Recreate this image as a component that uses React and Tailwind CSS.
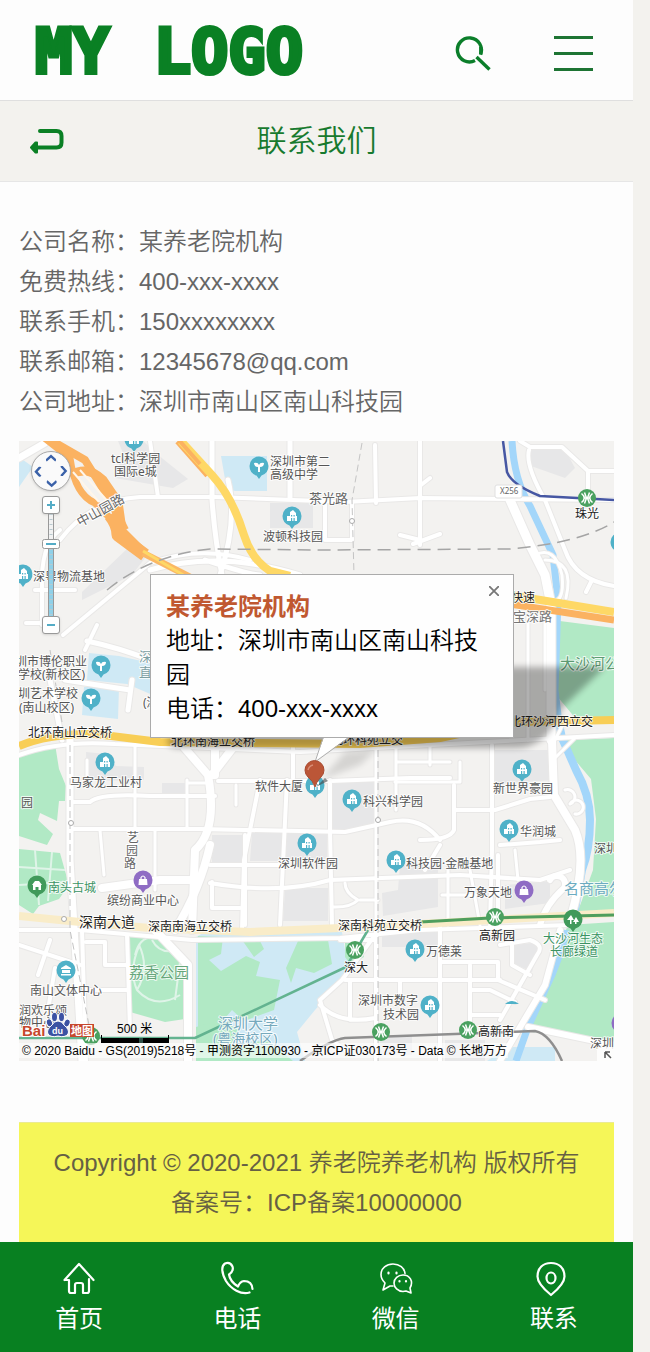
import React from "react";

const fontStack = "font-['Liberation_Sans','Noto_Sans_CJK_SC',sans-serif]";

const contacts = [
  ["公司名称", "某养老院机构"],
  ["免费热线", "400-xxx-xxxx"],
  ["联系手机", "150xxxxxxxx"],
  ["联系邮箱", "12345678@qq.com"],
  ["公司地址", "深圳市南山区南山科技园"],
];

function Header() {
  return (
    <header className="flex h-[101px] items-center justify-between border-b border-[#dfdfdf] pr-10 pl-[35px]">
      <a
        href="#home"
        aria-label="MY LOGO"
        className="flex gap-11 pt-1 font-['DejaVu_Sans_Mono',monospace] text-[62px] leading-none font-bold text-[#0a8024] [-webkit-text-stroke:4px_#0a8024]"
      >
        <span>MY</span>
        <span>LOGO</span>
      </a>
      <div className="flex items-center gap-[63px] pt-1.5">
        <button type="button" aria-label="搜索">
          <svg className="block h-9 w-9" viewBox="0 0 36 36" fill="none" stroke="#0b7e2a">
            <path d="M25.500 19.500A12 12 0 1 0 20 25.500" strokeWidth="3.400" />
            <path d="M21.500 22 34.500 34.500" strokeWidth="3.400" />
            <path d="M25.800 12v7.500" strokeWidth="3.400" />
          </svg>
        </button>
        <button type="button" aria-label="菜单" className="flex w-[39px] flex-col gap-[13px]">
          <span className="h-[3px] bg-[#1d7433]" />
          <span className="h-[3px] bg-[#1d7433]" />
          <span className="h-[3px] bg-[#1d7433]" />
        </button>
      </div>
    </header>
  );
}

function TitleBar() {
  return (
    <div className="grid h-[81px] grid-cols-[64px_1fr_64px] items-center border-b border-[#e6e6e6] bg-[#f3f2ee]">
      <a href="#back" aria-label="返回" className="pl-[29px]">
        <svg className="block h-[26px] w-[35px]" viewBox="0 0 35 26">
          <path d="M11 3h16.500q5 0 5 5v6.500q0 5-5 5H8" fill="none" stroke="#0a8024" strokeWidth="4" strokeLinecap="round" />
          <path d="M2 19.500 6.500 14.500h1.500v10H6.500z" fill="#0a8024" stroke="#0a8024" strokeLinejoin="round" strokeWidth="2" />
        </svg>
      </a>
      <h1 className="text-center text-[30px] leading-10 font-[350] text-[#177a2e]">联系我们</h1>
    </div>
  );
}

const whiteRoads = [
  ["M19 458 45 443", 7],
  ["M150 441 158 497 M60 540Q90 500 140 497H215L345 502 420 498 614 500", 4],
  ["M60 530Q40 545 42 590V625M26 623H42M35 590H75M63 635 150 563Q200 545 250 560M97 625 85 650", 4],
  ["M212 441V500Q215 540 222 575M228 480Q238 520 220 575M150 570Q220 550 300 575M205 560Q250 575 260 575M290 441V497", 5],
  ["M352 503V540H325V503M376 503 375 445M400 535 420 540M420 505V441M420 505V545M413 544 440 534M430 478 421 485", 4],
  ["M520 441 530 447H562L588 471H614M529 450Q525 465 545 500L565 550Q575 580 614 586M588 471V500M586 592 592 580", 4],
  ["M510 500 530 545 545 575 551 605V740", 9],
  ["M535 555Q555 545 562 575Q565 605 550 600M545 560Q575 560 566 598", 3],
  ["M528 615V740M545 610V690M490 610V640", 3],
  ["M87 641Q120 648 150 660M65 680 130 690M128 710 132 680M50 680 62 740", 5],
  ["M19 755Q60 740 115 744L300 752 614 735", 4],
  ["M70 740V860L82 1061", 7],
  ["M72 802H90Q100 793 150 796H215M72 829H200L345 832 390 822Q420 815 440 840", 4],
  ["M135 745V829M100 830 104 875M187 780V829M187 783H210M155 830V890M87 760V776", 3],
  ["M182 745 208 775Q218 830 195 850L192 930M235 745 212 775M215 745V775", 8],
  ["M293 745V778M218 781H330L410 778H450M330 780V830L332 925M260 780 244 860 242 930M287 780 280 925", 4],
  ["M236 785V805M376 745V925M396 745V810M396 762H450M430 745V765M460 762V782H395", 3],
  ["M492 745V850L490 925M454 785V830Q450 840 420 840M455 810H495L530 799 550 797M500 845 540 842 560 840M498 855V925M440 845 425 870", 4],
  ["M552 740 554 795 575 830Q588 860 570 920", 8],
  ["M565 790a7 7 0 1 1 5 14a7 7 0 1 1 5 10M575 738 556 757M555 740 565 720", 3],
  ["M210 883Q280 895 330 880L460 875 540 880 570 870M210 865H280M245 835V925M212 882V908H240", 4],
  ["M345 883Q345 893 358 900 350 908 332 907M360 900H378M470 870 480 925M448 868V925M442 895H480M515 850 518 880", 3],
  ["M19 930 80 930 192 940 340 938 420 930 570 925", 4],
  ["M82 930 86 1061M86 942H105V965H128M19 945 80 965M50 940 38 975M55 968 48 1010M86 990H128M127 935 130 1030", 4],
  ["M155 930 188 965V1061M210 845Q200 890 175 930M192 880H160L102 888", 8],
  ["M376 925V1061M440 925V1061M345 980H375M320 1000 342 980 375 935M350 980V1020M320 1000 332 1040 345 1050M320 1005Q340 1025 375 1018M376 980H500", 4],
  ["M340 940H376M440 962H498V980L545 1000M500 945 530 940Q545 945 537 955L500 1020M512 942V965L530 975M470 965V1035M470 990H490L515 1002M440 980H498M400 982V1000M470 1015H500", 4],
  ["M560 930 545 985 500 1061M528 1027 614 1045M550 880a8 8 0 1 1 14 8Q545 905 540 925", 6],
];

const cyanPins = [
  ["building", 134, 440],
  ["school", 259, 467],
  ["building", 292, 517],
  ["building", 23, 575],
  ["school", 101, 666],
  ["school", 91, 699],
  ["building", 105, 763],
  ["building", 315, 786],
  ["building", 352, 800],
  ["building", 522, 770],
  ["building", 509, 830],
  ["building", 307, 844],
  ["building", 396, 861],
  ["hall", 66, 971],
  ["building", 415, 950],
  ["building", 430, 1006],
  ["building", 620, 543],
];

const labels = [
  ["tcl科学园", 111, 463],
  ["国际e城", 114, 476],
  ["深圳市第二", 270, 466],
  ["高级中学", 270, 479],
  ["茶光路", 309, 503, 13, "#666666"],
  ["波顿科技园", 263, 541],
  ["深粤物流基地", 33, 581],
  ["圳市博伦职业", 15, 666],
  ["学校(新校区)", 18, 679],
  ["圳艺术学校", 18, 698],
  ["(南山校区)", 19, 712],
  ["深圳市", 139, 661, 13, "#7d9fa3"],
  ["直属", 139, 677, 13, "#7d9fa3"],
  ["(深", 143, 707],
  ["北环南山立交桥", 28, 737, 12, "#222222"],
  ["北环南海立交桥", 171, 746, 12, "#222222"],
  ["北环科苑立交", 331, 744, 12, "#222222"],
  ["快速", 511, 602, 12, "#222222"],
  ["宝深路", 513, 621, 13, "#777777"],
  ["北环沙河西立交", 509, 726, 12, "#222222"],
  ["大沙河公", 560, 669, 15, "#5e9b72"],
  ["马家龙工业村", 70, 787],
  ["软件大厦", 255, 791],
  ["科兴科学园", 363, 806],
  ["新世界豪园", 493, 793],
  ["华润城", 520, 836],
  ["深圳", 594, 853],
  ["园", 21, 807],
  ["深圳软件园", 278, 868],
  ["科技园·金融基地", 406, 868],
  ["南头古城", 48, 892, 12, "#3b9363"],
  ["缤纷商业中心", 107, 905],
  ["万象天地", 464, 897],
  ["名商高尔", 564, 894, 15, "#6cabc0"],
  ["深南大道", 79, 927, 14, "#222222"],
  ["深南南海立交桥", 148, 931, 12, "#222222"],
  ["深南科苑立交桥", 338, 930, 12, "#222222"],
  ["高新园", 479, 940, 12, "#222222"],
  ["大沙河生态", 543, 943, 12, "#3b9363"],
  ["长廊绿道", 550, 956, 12, "#3b9363"],
  ["深大", 344, 972, 12, "#222222"],
  ["万德莱", 426, 956],
  ["荔香公园", 129, 978, 15, "#67a67b"],
  ["南山文体中心", 30, 995],
  ["润欢乐颂", 19, 1015],
  ["物中心", 19, 1027],
  ["深圳大学", 218, 1029, 15, "#76a9bd"],
  ["(粤海校区)", 213, 1044, 14, "#76a9bd"],
  ["深圳市数字", 358, 1005],
  ["技术园", 383, 1019],
  ["高新南", 478, 1036, 12, "#222222"],
  ["珠光", 575, 518, 12, "#222222"],
  ["深圳", 590, 1048],
];

function Pin({ kind, x, y, color = "#4fb1c8" }) {
  return (
    <g transform={`translate(${x} ${y})`}>
      <path d="M-9.500-1a9.500 9.500 0 1 1 19 0Q9.500 6 2.500 8.600L0 12-2.500 8.600Q-9.500 6-9.500-1Z" fill={color} />
      {kind === "building" && (
        <path d="M-5 4v-5h3v-4l3-2 3 3v3h1v5zM-1-2v1.500h1.200V-2zM1.500-2v1.500h1.200V-2zM-1 1v3h1.200V1zM1.500 1v3h1.200V1z" fill="#fff" fillRule="evenodd" />
      )}
      {kind === "school" && <path d="M-1 5V0q-4 0-4-4 4-1 5 2 1-3 5-2 0 4-4 4v5z" fill="#fff" />}
      {kind === "hall" && <path d="M-5-3 0-6l5 3v1H-5zM-4-1h8v3h-8zM-5 3H5v1.500H-5z" fill="#fff" />}
      {kind === "bag" && (
        <g>
          <path d="M-4-2h8l.5 6h-9z" fill="#fff" />
          <path d="M-2-2v-1.500q2-3 4 0V-2" fill="none" stroke="#fff" strokeWidth="1.200" />
        </g>
      )}
      {kind === "gate" && <path d="M-5-1-2-5h4l3 4H4v5H1.500V1h-3v3H-4v-5z" fill="#fff" />}
      {kind === "tree" && <path d="M-2-5 1 0H-1.500v4h-1.500V0h-3zM3-3 6 2H3.500v2H2V2H0z" fill="#fff" />}
    </g>
  );
}

function Metro({ x, y }) {
  return (
    <g transform={`translate(${x} ${y})`}>
      <circle r="9" fill="#4aa160" />
      <path d="M-5.500-4.500Q0 0-5.500 4.500M5.500-4.500Q0 0 5.500 4.500M-2.500-5.500-.5 0-2.500 5.500M2.500-5.500.5 0 2.500 5.500M-3 0H3" fill="none" stroke="#fff" strokeWidth="1.500" />
    </g>
  );
}

function MapDrawing() {
  return (
    <svg
      className="block h-full w-full font-['Noto_Sans','Noto_Sans_CJK_SC',sans-serif]"
      viewBox="19 441 595 620"
      preserveAspectRatio="xMidYMid slice"
      role="img"
      aria-label="公司位置地图"
    >
      <defs>
        <filter id="soft" x="-10%" y="-30%" width="120%" height="160%">
          <feGaussianBlur stdDeviation="3" />
        </filter>
      </defs>
      <rect x="19" y="441" width="595" height="620" fill="#f3f2f0" />

      <g fill="#e7e7e8">
        <path d="M118 441h25l20 18 25 20-15 9-58-10 8-25z" />
        <path d="M82 592 128 548 145 558 132 575 82 600z" />
        <path d="M270 503h43v25h-43z" />
        <path d="M530 450h35l10 18-10 10-34-12z" />
        <path d="M86 752l20 2 10 12 28 1v13l-57 1zM162 783h25v10h-25z" />
        <path d="M332 782h42l2 45-44 3zM252 833h75v28h-77zM285 888h43v33h-45zM247 863h-35v-28h33z" />
        <path d="M382 893l16-3 2-25 38-3v45l-55 9zM494 750h60v30l-60 4z" />
        <path d="M505 885l45-4v22l-45 6zM515 945l25-3-8 30-17-8z" />
        <path d="M382 935h20v-8h35v20h-55zM380 1035h32v20h-32zM445 1040h40v21h-40z" />
      </g>

      <g fill="#cfe9f5">
        <path d="M221 456h46v35h-32q-10-2-10-12zM19 457l14 10-14 20z" />
        <path d="M89 653l30 3 36 8v32l-28-12-40-4zM84 687h35l-1 32-36-4z" />
        <path d="M196 937l9-5h137l3 18 15 10-45 50-18 22 8 29H196z" />
        <path d="M487 1061l20-14h48v14z" />
      </g>
      <g fill="#b1e9c5">
        <path d="M19 756 55 744l4 25 7 17-1 15h-6l-2 20-17-8-2 7 15 14-6 11-28-9z" />
        <path d="M19 849 60 853l9 32-10 14-20 7-6 8-14-9z" />
        <path d="M130 933l22 1 28 20 7 20-2 45-20 3-35-10-3-30z" />
        <path d="M198 936l25 1-2 17-12 6 12 11 25-15 14 6-4 14 24 4-6 30-30 11-12-11-12 14-22 11z" />
        <path d="M240 937h18l6 12-10 8zM298 941l30-1 4 24-18 9-18-5-5 15-5-15zM345 937h15l4 20-13 8-6-8z" />
        <path d="M196 1027l25-7 18 10-9 16 38-6 25 21H196z" />
        <path d="M552 620l62 8v89l-38 2-24-29zM565 740l49-2v173h-36l15-41 3-51-5-40-22-26z" />
        <path d="M568 925l46-3v125l-82-15-4-9z" />
      </g>
      <g stroke="#dff4e8" strokeWidth="2" fill="none">
        <path d="M19 867 65 870M35 850 39 905M52 852 48 901M19 885 68 882M135 955Q140 935 156 938M152 940Q160 955 177 950M140 944Q128 970 137 990 155 1010 180 995M137 990Q150 968 139 945M180 962 175 1000" />
      </g>

      <g fill="none" stroke="#a3d6fa">
        <path d="M512 441Q514 480 530 506L553 555 558 600 555 690 558 715" strokeWidth="7" />
        <path d="M552 620V690L562 738 576 770Q590 795 590 820 590 850 582 870L574 915" strokeWidth="8" />
        <path d="M566 930Q560 960 545 990L528 1027 516 1061" strokeWidth="7" />
      </g>

      <g fill="none" strokeLinejoin="round" strokeLinecap="round">
        {whiteRoads.map(([d, w]) => (
          <path key={d} d={d} stroke="#e9e8e7" strokeWidth={w + 2} />
        ))}
        {whiteRoads.map(([d, w]) => (
          <path key={d} d={d} stroke="#ffffff" strokeWidth={w} />
        ))}
      </g>

      <g fill="none" strokeLinejoin="round">
        <path d="M42 436 70 458Q75 495 95 503L120 528 145 553" stroke="#fbb261" strokeWidth="7" />
        <path d="M52 441 85 460 110 500 125 530" stroke="#fbb261" strokeWidth="8" />
        <path d="M70 475Q88 465 103 480L118 502 122 530" stroke="#fbb261" strokeWidth="9" />
        <path d="M110 515Q118 525 118 535L145 555" stroke="#fbb261" strokeWidth="13" />
        <path d="M73 472 99 502M80 470 110 504" stroke="#fff6ea" strokeWidth="2" />
        <path d="M143 553 190 577" stroke="#fbb865" strokeWidth="7" />
        <path d="M143 551 190 579" stroke="#fed866" strokeWidth="3" />
        <path d="M178 441 208 475" stroke="#fbb261" strokeWidth="7" />
        <path d="M181 441 212 475Q233 498 244 535 252 560 270 571L290 576" stroke="#fed866" strokeWidth="8" />
        <path d="M178 439 200 464" stroke="#fbb261" strokeWidth="4" />
        <path d="M19 746Q50 733 95 734L160 742 360 744 440 738 515 722 614 720" stroke="#f8ce56" strokeWidth="8" />
        <path d="M510 595 614 612" stroke="#fed866" strokeWidth="8" />
        <path d="M510 604 614 620" stroke="#fbb261" strokeWidth="7" />
        <path d="M19 916 80 922 150 928 250 932 340 928 420 924 614 913" stroke="#f9ecc8" strokeWidth="8" />
        <path d="M503 441 507 472Q512 485 540 496L614 500" stroke="#4657a3" strokeWidth="2.500" />
        <path d="M420 922 490 918 614 915" stroke="#4f9e5d" strokeWidth="3" />
        <path d="M19 1038H195L346 967 368 930" stroke="#63b390" strokeWidth="2.500" />
        <path d="M300 1061Q330 1040 345 1038L535 1031Q550 1034 562 1061" stroke="#8f8f8f" strokeWidth="2.500" />
        <path d="M107 590Q150 555 210 549L320 550 510 549Q580 543 614 522" stroke="#a5a5a5" strokeWidth="1.500" strokeDasharray="13 7" />
        <path d="M362 443 352 500 354 575M50 650 65 740M70 745V930L92 1040M378 750V1061" stroke="#c4c4c4" strokeDasharray="7 4" />
      </g>
      <g fill="#fff" stroke="#aaa">
        <circle cx="352" cy="521" r="2.500" />
        <circle cx="71" cy="823" r="2.500" />
        <circle cx="378" cy="820" r="2.500" />
        <circle cx="64" cy="919" r="2.500" />
      </g>

      {cyanPins.map(([kind, x, y]) => (
        <Pin key={`${x}-${y}`} kind={kind} x={x} y={y} />
      ))}
      <path d="M505 1004q7-6 14 0z" fill="#4fb1c8" />
      <Pin kind="gate" x={37} y={886} color="#419a5b" />
      <Pin kind="tree" x={573} y={920} color="#419a5b" />
      <Pin kind="bag" x={143} y={881} color="#8f6cc4" />
      <Pin kind="bag" x={524} y={891} color="#8f6cc4" />
      <Pin kind="bag" x={621} y={1024} color="#8f6cc4" />
      <Metro x={587} y={498} />
      <Metro x={495} y={917} />
      <Metro x={355} y={950} />
      <Metro x={381} y={1032} />
      <Metro x={468} y={1030} />
      <Metro x={91} y={1036} />

      <rect x="495" y="485" width="27" height="13" rx="2" fill="#fff" stroke="#e0e0e0" />
      <text x="500" y="494" fontSize="8" fill="#666">X256</text>

      <g stroke="#ffffff" strokeWidth="2" strokeLinejoin="round" paintOrder="stroke">
        {labels.map(([text, x, y, size = 12, fill = "#555555"]) => (
          <text key={`${x}-${y}`} x={x} y={y} fontSize={size} fill={fill} strokeOpacity="0.8" paintOrder="stroke">
            {text}
          </text>
        ))}
        <text x="80" y="527" fontSize="13" fill="#666666" transform="rotate(-29 80 527)" paintOrder="stroke">中山园路</text>
        <g fontSize="12" fill="#666666">
          <text x="127" y="842" paintOrder="stroke">艺</text>
          <text x="126" y="855" paintOrder="stroke">园</text>
          <text x="124" y="868" paintOrder="stroke">路</text>
        </g>
      </g>

      <path d="M168 738 505 667H605L562 708Q548 748 515 748H180Q165 748 168 738Z" fill="#000" opacity="0.3" filter="url(#soft)" />
      <path d="M322 779 345 752 376 750 360 765Z" fill="#000" opacity="0.12" filter="url(#soft)" />
      <path d="M324 737 315 761 349 737Z" fill="#fff" />
      <path d="M323 738 315 762 348 738" fill="none" stroke="#b0b0b0" />
      <path d="M316 787 325 778 328 781Z" fill="#444" opacity="0.6" />
      <path d="M315 787Q313 781 308 777A9.500 9.500 0 1 1 321 777Q316 782 315 787Z" fill="#bb5637" stroke="#a84a30" />
      <path d="M308 770q1-4 5-5" fill="none" stroke="#d88d76" strokeWidth="1.500" />

      <rect x="19" y="1043" width="489" height="15" fill="#fff" opacity="0.6" />
      <g fontWeight="700" fill="#c6472d">
        <text x="22" y="1036" fontSize="15" stroke="#fff" strokeWidth="2" paintOrder="stroke" fontFamily="Liberation Sans">Bai</text>
        <g fill="#3c52a3" stroke="#fff" strokeWidth="1">
          <ellipse cx="49.500" cy="1023" rx="3" ry="4" transform="rotate(-20 49 1023)" />
          <ellipse cx="54.500" cy="1017" rx="3" ry="4.500" />
          <ellipse cx="61.500" cy="1017" rx="3" ry="4.500" />
          <ellipse cx="67" cy="1023" rx="3" ry="4" transform="rotate(20 67 1023)" />
          <path d="M58 1021q4 0 6 4 6 5 4 9-3 4-10 2-7 2-10-2-2-4 4-9 2-4 6-4z" />
        </g>
        <text x="52" y="1034" fontSize="9" fill="#fff" fontFamily="Liberation Sans">du</text>
        <rect x="70" y="1024" width="24" height="13" fill="#c6472d" />
        <text x="71" y="1035" fontSize="11" fill="#fff">地图</text>
      </g>
      <path d="M101 1035v8h68v-8h-1v3h-66v-3z" fill="#000" />
      <path d="M139 1038h4v5h-4z" fill="#2f4f47" />
      <rect x="597" y="1047" width="17" height="14" fill="#fff" opacity="0.8" />
      <path d="M605 1052v6M605 1052h5M605 1052l6 6" stroke="#555" strokeWidth="1.500" fill="none" />
    </svg>
  );
}

function PanButton({ label, turn }) {
  return (
    <button type="button" aria-label={label} className={`flex items-center justify-center ${turn}`}>
      <svg className="h-2.5 w-2.5" viewBox="0 0 10 10" fill="none" stroke="#3b62a9" strokeWidth="2.400">
        <path d="M0 7.500 5 3l5 4.500" />
      </svg>
    </button>
  );
}

function MapControls() {
  const square =
    "flex h-[18px] w-[18px] items-center justify-center rounded-[3px] border border-[#999] bg-white shadow-sm";
  return (
    <div className="absolute top-2.5 left-3 flex w-10 flex-col items-center">
      <div className="grid h-10 w-10 grid-cols-3 grid-rows-3 rounded-full border border-[#aaa] bg-[#fafafa] shadow">
        <span />
        <PanButton label="向上平移" turn="" />
        <span />
        <PanButton label="向左平移" turn="-rotate-90" />
        <span />
        <PanButton label="向右平移" turn="rotate-90" />
        <span />
        <PanButton label="向下平移" turn="rotate-180" />
        <span />
      </div>
      <button type="button" aria-label="放大" className={`mt-[5px] ${square}`}>
        <svg className="h-2.5 w-2.5" viewBox="0 0 10 10" stroke="#54acc6" strokeWidth="2">
          <path d="M5 1v8M1 5h8" />
        </svg>
      </button>
      <div className="relative h-[102px] w-[18px]">
        <svg className="block h-full w-full" viewBox="0 0 18 102">
          <path d="M6.500 0v102h5V0z" fill="#f2f2f2" stroke="#999" />
          <path d="M7 32h4v70H7z" fill="#8fd0e8" />
          <path d="M9 0v102" stroke="#b9c9cf" strokeWidth="3" strokeDasharray="1 4" />
          <rect x="0.500" y="25.500" width="17" height="9" rx="2" fill="#fff" stroke="#999" />
          <path d="M4 30h10" stroke="#54acc6" strokeWidth="2" />
        </svg>
        <input
          type="range"
          min="3"
          max="19"
          defaultValue="15"
          aria-label="缩放级别"
          className="absolute inset-0 h-full w-full opacity-0 [direction:rtl] [writing-mode:vertical-lr]"
        />
      </div>
      <button type="button" aria-label="缩小" className={square}>
        <svg className="h-2.5 w-2.5" viewBox="0 0 10 10" stroke="#54acc6" strokeWidth="2">
          <path d="M1 5h8" />
        </svg>
      </button>
    </div>
  );
}

function CompanyMap() {
  return (
    <section className="relative mt-[19px] h-[620px] overflow-hidden">
      <MapDrawing />
      <MapControls />
      <div className="absolute top-[133px] left-[131px] h-[164px] w-[364px] border border-[#ababab] bg-[#fefefe] px-[15px] py-[15px] text-2xl leading-[34px] text-black">
        <button type="button" aria-label="关闭" className="absolute top-[11px] right-3.5">
          <svg className="block h-2.5 w-2.5" viewBox="0 0 10 10" stroke="#777" strokeWidth="1.800">
            <path d="M0 0 10 10M10 0 0 10" />
          </svg>
        </button>
        <h2 className="font-bold text-[#c05830]">某养老院机构</h2>
        <p className="font-[350]">地址：深圳市南山区南山科技园</p>
        <p className="font-[350]">电话：400-xxx-xxxx</p>
      </div>
      <span className="absolute bottom-6 left-[98px] text-xs leading-4 text-black">500 米</span>
      <small className="absolute bottom-0.5 left-[3px] text-xs leading-4 whitespace-nowrap text-black">
        © 2020 Baidu - GS(2019)5218号 - 甲测资字1100930 - 京ICP证030173号 - Data © 长地万方
      </small>
    </section>
  );
}

const navItems = [
  {
    label: "首页",
    href: "#home",
    icon: <path d="M1.500 18 16 2l14.500 16M1.500 18H6v11q0 2 2 2h4v-8q0-2 2-2h4q2 0 2 2v8h4q2 0 2-2V17" />,
  },
  {
    label: "电话",
    href: "#call",
    icon: (
      <path d="M28.500 30.500C20 33 10 27 5 19 .5 11 0 4 4 1.500q5-2 7.500 3C13 9 10 11 8 12.500q1 7 9 12 2-5 6-5.500 8 0 8.500 8" />
    ),
  },
  {
    label: "微信",
    href: "#wechat",
    icon: (
      <g strokeWidth="1.600">
        <path d="M13 24H10L3 28l2-7Q1 17 1 12.500C1 6 6.500 2 13 2c6.500 0 11.500 4 12 9.500" />
        <path d="M23 13c-5 0-9 3.500-9 8s4 8.500 9 8.500l3-.5 5 2-1-5c4-7-.5-13-7-13Z" />
        <path d="M8.500 10.500v1M16.500 10.500v1M19.500 19v.5M26 19v.5" strokeWidth="2.200" />
      </g>
    ),
  },
  {
    label: "联系",
    href: "#contact",
    icon: (
      <g transform="translate(-3 0)">
        <path d="M16 33Q2.500 22 2.500 14.500C2.500 6 8 1 16 1s13.500 5 13.500 13.500Q29.500 22 16 33Z" />
        <ellipse cx="16" cy="16" rx="4.500" ry="5.500" />
      </g>
    ),
  },
];

function BottomNav() {
  return (
    <nav className="grid h-[110px] grid-cols-4 bg-[#088021] text-white">
      {navItems.map(({ label, href, icon }) => (
        <a key={label} href={href} className="flex flex-col items-center gap-[7px] pt-5 text-2xl leading-9">
          <svg
            className="h-8 w-8 overflow-visible"
            viewBox="0 0 32 32"
            fill="none"
            stroke="currentColor"
            strokeWidth="2.200"
            strokeLinecap="round"
            strokeLinejoin="round"
          >
            {icon}
          </svg>
          <span>{label}</span>
        </a>
      ))}
    </nav>
  );
}

export default function App() {
  return (
    <div className={`min-h-screen bg-[#f3f2ee] pr-[17px] ${fontStack}`}>
      <div className="bg-[#fdfdfd]">
        <Header />
        <TitleBar />
        <main className="px-[19px] pt-10">
          <dl className="text-2xl leading-10 font-[350] text-[#666]">
            {contacts.map(([name, value]) => (
              <div key={name} className="flex">
                <dt>{name}：</dt>
                <dd>{value}</dd>
              </div>
            ))}
          </dl>
          <CompanyMap />
          <footer className="mt-[61px] border-t border-[#ebeb90] bg-[#f5f658] py-5 pb-[19px] text-center text-2xl leading-10 font-[350] text-[#666044]">
            <p>Copyright © 2020-2021 养老院养老机构 版权所有</p>
            <p>备案号：ICP备案10000000</p>
          </footer>
        </main>
        <BottomNav />
      </div>
    </div>
  );
}
